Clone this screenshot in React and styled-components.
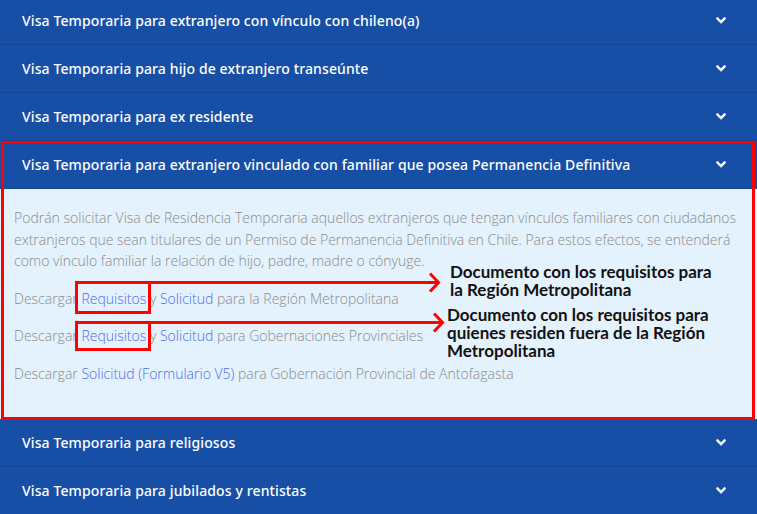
import React from "react";
import styled, { createGlobalStyle } from "styled-components";

const Global = createGlobalStyle`
  html, body { margin: 0; padding: 0; background: #184fa6; }
  body { width: 757px; height: 514px; overflow: hidden; }
  * { box-sizing: border-box; }
`;

const Accordion = styled.div`
  margin-top: -3px;
  width: 757px;
  display: flex;
  flex-direction: column;
`;

const Item = styled.div`
  position: relative;
  &::after {
    content: "";
    display: ${(p) => (p.$marked ? "block" : "none")};
    position: absolute;
    left: 1px;
    right: 2px;
    top: 0;
    bottom: -1px;
    border: 3px solid #ff0000;
    pointer-events: none;
    z-index: 3;
  }
`;

const Header = styled.div`
  height: 48px;
  display: flex;
  align-items: center;
  justify-content: space-between;
  padding: 0 31px 0 22px;
  background: #184fa6;
  border-bottom: 1px solid #154591;
  color: #ffffff;
  font-family: "Noto Sans", sans-serif;
  font-weight: 500;
  font-size: 14px;
  letter-spacing: 0.12px;
`;

const Chevron = () => (
  <svg width="10" height="7" viewBox="0 0 10 7">
    <polyline
      points="1.5,1.5 5,5 8.5,1.5"
      fill="none"
      stroke="#fff"
      strokeWidth="2.4"
      strokeLinecap="square"
    />
  </svg>
);

const Panel = styled.div`
  position: relative;
  background: #e4f2fd;
  padding: 18px 16px 19px 14px;
  font-family: "Open Sans", sans-serif;
  font-weight: 300;
  font-size: 14px;
  line-height: 21.5px;
  color: #8a8a8a;
`;

const Para = styled.p`
  margin: 0 0 16px 0;
`;

const Link = styled.a`
  color: #4b6cf1;
  text-decoration: none;
`;

const Overlay = styled.svg`
  position: absolute;
  left: 0;
  top: 0;
  pointer-events: none;
`;

const Note = styled.div`
  position: absolute;
  left: ${(p) => p.$x}px;
  top: ${(p) => p.$y}px;
  font-family: "Lato", sans-serif;
  font-weight: 700;
  font-size: 17px;
  line-height: 18px;
  color: #111111;
  white-space: nowrap;
`;

const rows = [
  "Visa Temporaria para extranjero con vínculo con chileno(a)",
  "Visa Temporaria para hijo de extranjero transeúnte",
  "Visa Temporaria para ex residente",
];

const after = [
  "Visa Temporaria para religiosos",
  "Visa Temporaria para jubilados y rentistas",
];

export default function App() {
  return (
    <>
      <Global />
      <Accordion>
        {rows.map((t) => (
          <Item key={t}>
            <Header>
              <span>{t}</span>
              <Chevron />
            </Header>
          </Item>
        ))}
        <Item $marked>
          <Header>
            <span>
              Visa Temporaria para extranjero vinculado con familiar que posea
              Permanencia Definitiva
            </span>
            <Chevron />
          </Header>
          <Panel>
            <Para>
              Podrán solicitar Visa de Residencia Temporaria aquellos extranjeros
              que tengan vínculos familiares con ciudadanos extranjeros que sean
              titulares de un Permiso de Permanencia Definitiva en Chile. Para
              estos efectos, se entenderá como vínculo familiar la relación de
              hijo, padre, madre o cónyuge.
            </Para>
            <Para>
              Descargar <Link href="#">Requisitos</Link> y{" "}
              <Link href="#">Solicitud</Link> para la Región Metropolitana
            </Para>
            <Para>
              Descargar <Link href="#">Requisitos</Link> y{" "}
              <Link href="#">Solicitud</Link> para Gobernaciones Provinciales
            </Para>
            <Para>
              Descargar <Link href="#">Solicitud (Formulario V5)</Link> para
              Gobernación Provincial de Antofagasta
            </Para>
            <Overlay width="757" height="229" viewBox="0 0 757 229">
              <g fill="none" stroke="#ff0000" strokeWidth="3">
                <rect x="76.5" y="93.5" width="73" height="30" />
                <line x1="150" y1="93.5" x2="438" y2="93.5" />
                <polyline points="430,84.5 438.5,93.5 430,102.5" strokeLinejoin="miter" />
                <rect x="76.5" y="133.5" width="73" height="27" />
                <line x1="150" y1="133.5" x2="442" y2="133.5" />
                <polyline points="434,124.5 442.5,133.5 434,142.5" strokeLinejoin="miter" />
              </g>
            </Overlay>
            <Note $x={450} $y={74}>
              Documento con los requisitos para
              <br />
              la Región Metropolitana
            </Note>
            <Note $x={447} $y={117}>
              Documento con los requisitos para
              <br />
              quienes residen fuera de la Región
              <br />
              Metropolitana
            </Note>
          </Panel>
        </Item>
        {after.map((t) => (
          <Item key={t}>
            <Header>
              <span>{t}</span>
              <Chevron />
            </Header>
          </Item>
        ))}
      </Accordion>
    </>
  );
}
